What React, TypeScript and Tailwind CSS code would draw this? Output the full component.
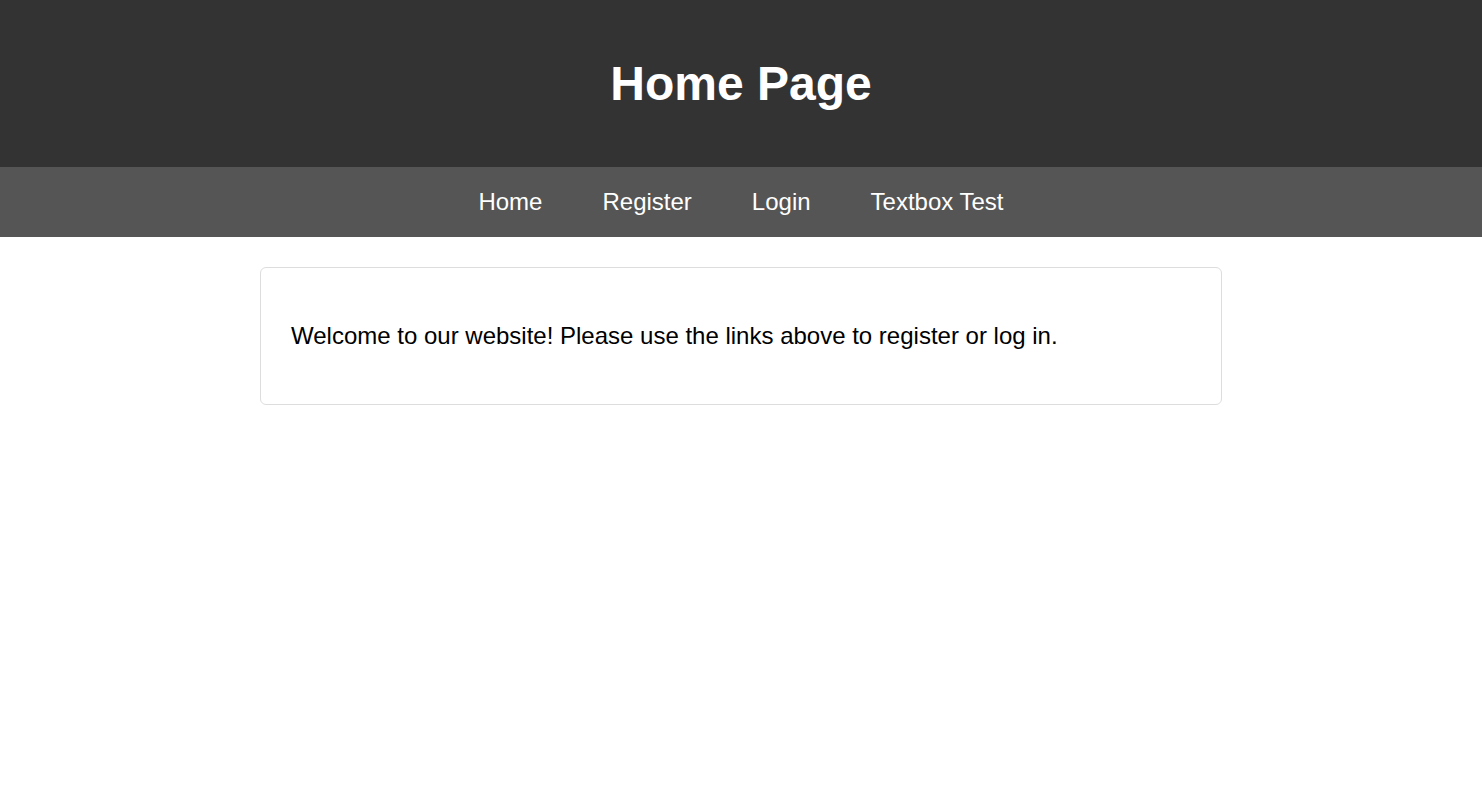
export default function App() {
  return (
    <div className="min-h-screen bg-white" style={{ fontFamily: '"Liberation Sans", Arial, sans-serif' }}>
      <header className="h-[167px] bg-[#333333] flex items-center justify-center">
        <h1 className="text-[48px] leading-[55px] font-bold text-white">Home Page</h1>
      </header>
      <nav className="h-[70px] bg-[#555555] flex items-center justify-center gap-[60px]">
        <a href="#" className="text-[24px] leading-[28px] text-white">Home</a>
        <a href="#" className="text-[24px] leading-[28px] text-white">Register</a>
        <a href="#" className="text-[24px] leading-[28px] text-white">Login</a>
        <a href="#" className="text-[24px] leading-[28px] text-white">Textbox Test</a>
      </nav>
      <main className="w-[962px] mx-auto mt-[30px] border border-[#dddddd] rounded-[6px] px-[30px] py-[54px]">
        <p className="text-[24px] leading-[28px] text-black">
          Welcome to our website! Please use the links above to register or log in.
        </p>
      </main>
    </div>
  );
}
